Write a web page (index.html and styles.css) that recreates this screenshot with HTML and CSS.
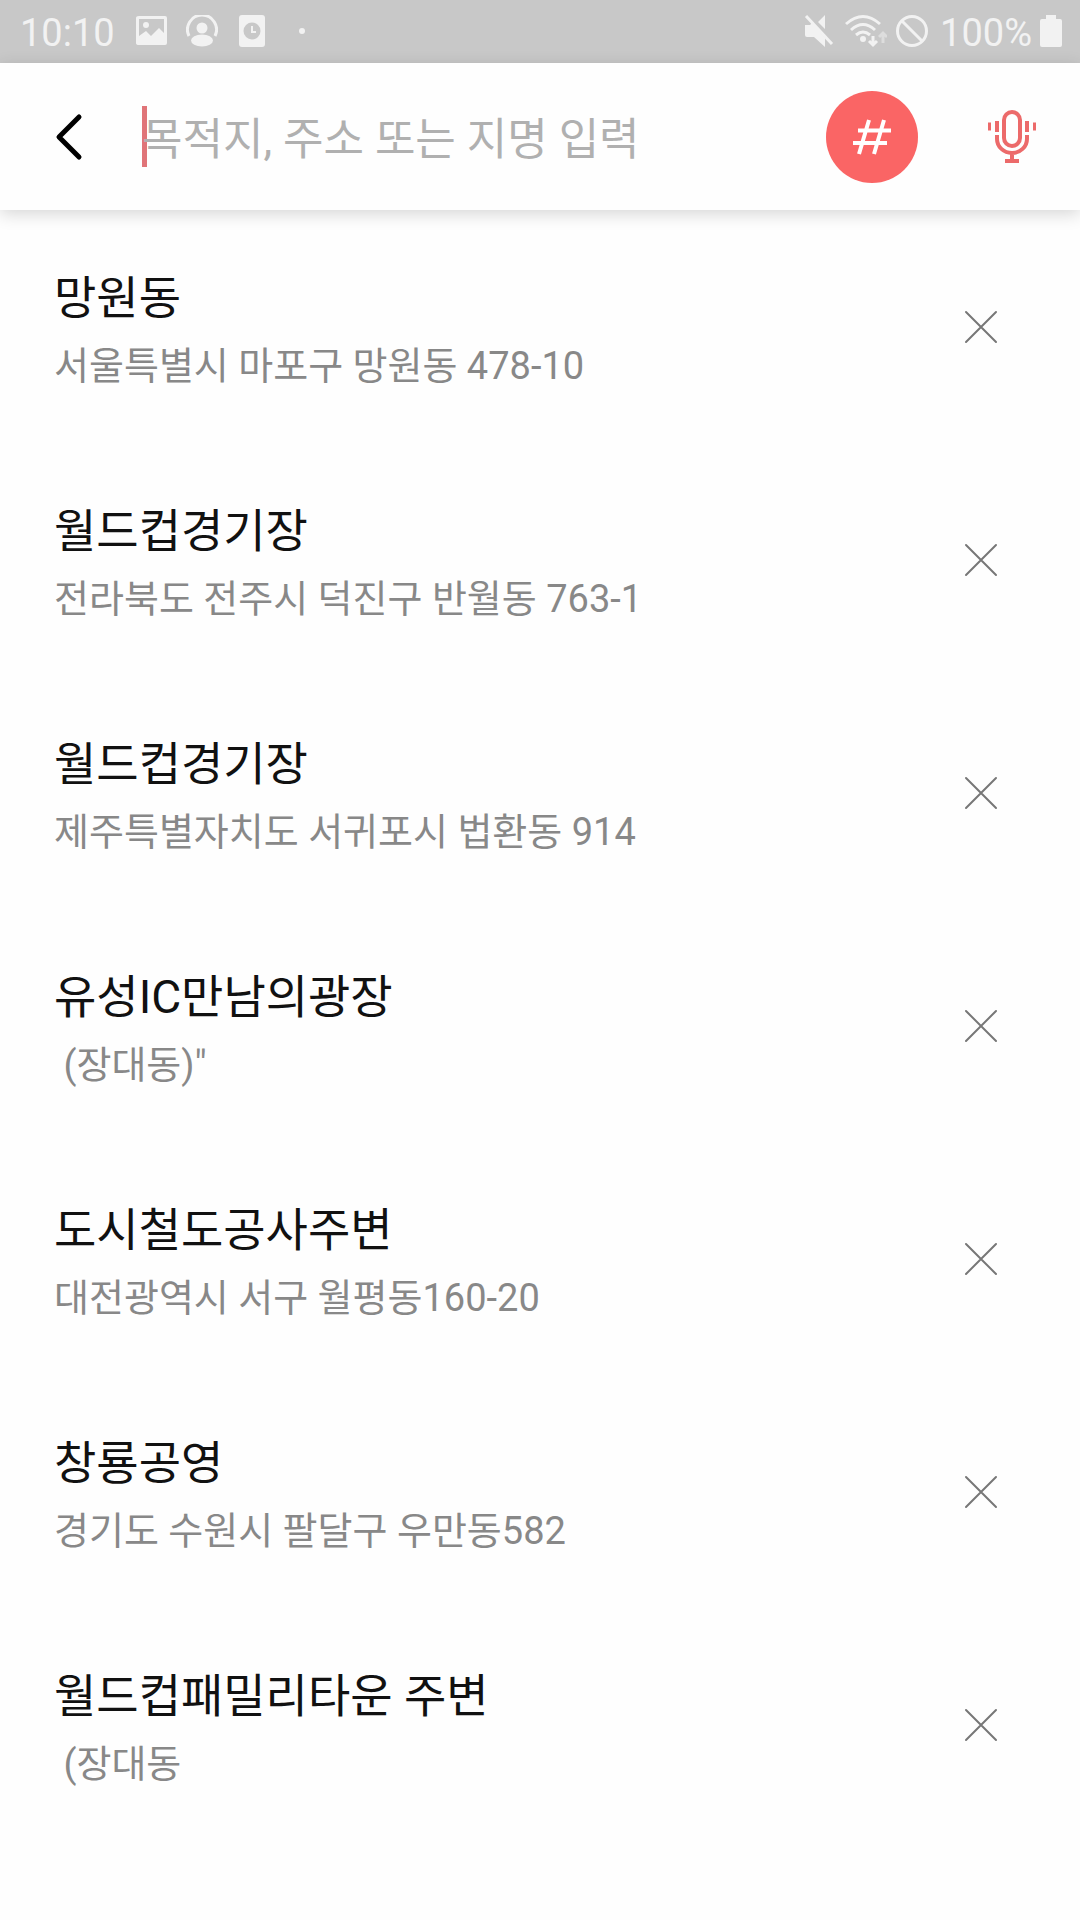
FILE: index.html
```html
<!DOCTYPE html>
<html lang="ko">
<head>
<meta charset="utf-8">
<meta name="viewport" content="width=device-width, initial-scale=1">
<title>목적지 검색</title>
<link rel="stylesheet" href="styles.css">
</head>
<body>
<svg class="sprite" aria-hidden="true">
  <symbol id="close" viewBox="0 0 34 34"><path d="M2 2L32 32M32 2L2 32" fill="none" stroke="currentColor" stroke-width="2" stroke-linecap="round"/></symbol>
</svg>

<div class="status">
  <div class="status-group">
    <span class="status-text">10:10</span>
    <svg class="picture" width="32" height="32" viewBox="0 0 32 32" fill="currentColor"><path fill-rule="evenodd" d="M3 1H29Q31 1 31 3V28Q31 30 29 30H3Q0 30 0 28V3Q0 1 3 1ZM3 4V21L10 16L15 21L23 13L28 18V4Z"/><circle cx="10" cy="10" r="3"/></svg>
    <svg width="32" height="32" viewBox="0 0 32 32" fill="currentColor"><path d="M3 21A14.500 14.500 0 1 1 29 21" fill="none" stroke="currentColor" stroke-width="3"/><circle cx="16" cy="13" r="5.500"/><ellipse cx="16" cy="25.500" rx="11" ry="6"/></svg>
    <svg class="doc" width="26" height="32" viewBox="0 0 26 32" fill="currentColor"><rect width="26" height="32" rx="3"/><circle class="clock-face" cx="13" cy="16" r="8.500"/><path d="M13 11V17H17" fill="none" stroke="currentColor" stroke-width="2"/></svg>
    <span class="dot"></span>
  </div>
  <div class="status-group status-right">
    <svg width="30" height="34" viewBox="0 0 30 34" fill="currentColor"><path d="M1 11H6L8 9L21 24V33L10 23H3Q1 23 1 21ZM21 1V15L14 8Z"/><path d="M2 2L28 30" fill="none" stroke="currentColor" stroke-width="3"/></svg>
    <svg class="wifi" width="42" height="34" viewBox="0 0 42 34" fill="none" stroke="currentColor" stroke-width="3"><path d="M1 10Q18-5 35 10M6 16Q18 5 30 16M11 21Q18 15 25 21"/><circle cx="18" cy="25" r="3" fill="currentColor" stroke="none"/><path d="M28 22V31M24 27L28 31L32 27"/><path class="faint" d="M38 29V19M34 23L38 19L42 23"/></svg>
    <svg width="34" height="34" viewBox="0 0 34 34" fill="none" stroke="currentColor" stroke-width="3"><circle cx="17" cy="17" r="14.500"/><path d="M7 7L27 27"/></svg>
    <span class="status-text percent">100%</span>
    <svg width="22" height="34" viewBox="0 0 22 34" fill="currentColor"><path d="M6 1H16V5H20Q22 5 22 7V31Q22 33 20 33H2Q0 33 0 31V7Q0 5 2 5H6Z"/></svg>
  </div>
</div>

<header class="search">
  <button class="back" type="button" aria-label="뒤로"><svg width="28" height="48" viewBox="0 0 28 48"><path d="M24 4L4 24L24 44" fill="none" stroke="currentColor" stroke-width="5" stroke-linecap="round" stroke-linejoin="round"/></svg></button>
  <input class="query" type="text" aria-label="목적지 검색" placeholder="목적지, 주소 또는 지명 입력">
  <button class="hash" type="button" aria-label="태그 검색"><svg width="40" height="36" viewBox="0 0 40 36"><path d="M17 1L7 35M32 1L22 35M6 11.500H39M1 24H35" fill="none" stroke="currentColor" stroke-width="4"/></svg></button>
  <button class="mic" type="button" aria-label="음성 검색"><svg width="48" height="54" viewBox="0 0 48 54" fill="none" stroke="currentColor"><rect x="16" y="2" width="16" height="34" rx="8" stroke-width="4"/><path d="M9 25V29A15 14 0 0 0 39 29V25M24 43V51M17 51H31M9 11V22M39 11V22" stroke-width="4"/><path d="M1.500 12.500V20.500M46.500 12.500V20.500" stroke-width="3"/></svg></button>
</header>

<main>
  <ul class="places">
    <li class="place"><div class="info"><h2 class="name">망원동</h2><p class="address">서울특별시 마포구 망원동 478-10</p></div><button class="remove" type="button" aria-label="망원동 삭제"><svg width="34" height="34"><use href="#close"/></svg></button></li>
    <li class="place"><div class="info"><h2 class="name">월드컵경기장</h2><p class="address">전라북도 전주시 덕진구 반월동 763-1</p></div><button class="remove" type="button" aria-label="월드컵경기장 삭제"><svg width="34" height="34"><use href="#close"/></svg></button></li>
    <li class="place"><div class="info"><h2 class="name">월드컵경기장</h2><p class="address">제주특별자치도 서귀포시 법환동 914</p></div><button class="remove" type="button" aria-label="월드컵경기장 삭제"><svg width="34" height="34"><use href="#close"/></svg></button></li>
    <li class="place"><div class="info"><h2 class="name">유성IC만남의광장</h2><p class="address"> (장대동)"</p></div><button class="remove" type="button" aria-label="유성IC만남의광장 삭제"><svg width="34" height="34"><use href="#close"/></svg></button></li>
    <li class="place"><div class="info"><h2 class="name">도시철도공사주변</h2><p class="address">대전광역시 서구 월평동160-20</p></div><button class="remove" type="button" aria-label="도시철도공사주변 삭제"><svg width="34" height="34"><use href="#close"/></svg></button></li>
    <li class="place"><div class="info"><h2 class="name">창룡공영</h2><p class="address">경기도 수원시 팔달구 우만동582</p></div><button class="remove" type="button" aria-label="창룡공영 삭제"><svg width="34" height="34"><use href="#close"/></svg></button></li>
    <li class="place"><div class="info"><h2 class="name">월드컵패밀리타운 주변</h2><p class="address"> (장대동</p></div><button class="remove" type="button" aria-label="월드컵패밀리타운 주변 삭제"><svg width="34" height="34"><use href="#close"/></svg></button></li>
  </ul>
</main>
</body>
</html>
```
FILE: styles.css
```css
* { box-sizing: border-box; }

body {
  margin: 0;
  min-height: 100vh;
  background: #fefefe;
  color: #111;
  font-family: Roboto, "Noto Sans CJK KR", sans-serif;
}

svg { display: block; flex: none; }
.sprite { position: absolute; width: 0; height: 0; }

button {
  display: flex;
  align-items: center;
  justify-content: center;
  flex: none;
  padding: 0;
  border: 0;
  background: none;
  color: inherit;
  cursor: pointer;
}

.status {
  display: flex;
  align-items: center;
  justify-content: space-between;
  height: 63px;
  padding: 0 18px 2px 20px;
  background: #c8c8c8;
  color: #f2f2f2;
}

.status-group { display: flex; align-items: center; gap: 18px; }
.status-right { gap: 8px; }
.status-text { font-size: 38px; line-height: 44px; padding-top: 4px; }
.picture { margin-left: 3px; }
.doc { margin-left: 3px; }
.clock-face { fill: #c8c8c8; }
.dot { width: 6px; height: 6px; margin-left: 16px; border-radius: 50%; background: currentColor; }
.wifi { margin-left: 3px; }
.faint { opacity: 0.5; }
.percent { margin-left: 3px; }

.search {
  display: flex;
  align-items: center;
  height: 147px;
  padding: 0 41px 0 39px;
  background: #fefefe;
  box-shadow: 0 4px 16px rgba(0, 0, 0, 0.16);
}

.back { width: 60px; height: 92px; color: #000; }

.query {
  flex: 1;
  min-width: 0;
  height: 92px;
  margin-left: 43px;
  padding: 6px 0 0;
  border: 0;
  outline: 0;
  background: linear-gradient(#e07478, #e07478) left center / 5px 61px no-repeat;
  font: inherit;
  font-size: 44px;
}
.query::placeholder { color: #b0b0b0; opacity: 1; }

.hash {
  width: 92px;
  height: 92px;
  border-radius: 50%;
  background: #fa6565;
  color: #fff;
}

.mic { width: 54px; height: 92px; margin-left: 67px; color: #ec6a6a; }

.places { margin: 0; padding: 0; list-style: none; }

.place {
  display: flex;
  align-items: center;
  justify-content: space-between;
  height: 233px;
  padding: 0 64px 0 54px;
}

.info { min-width: 0; padding-top: 10px; }
.name { margin: 0; font-size: 46px; font-weight: 400; line-height: 68px; }
.address { margin: 0; color: #888; font-size: 38px; line-height: 68px; white-space: pre; }
.remove { width: 70px; height: 70px; color: #777; }
```
